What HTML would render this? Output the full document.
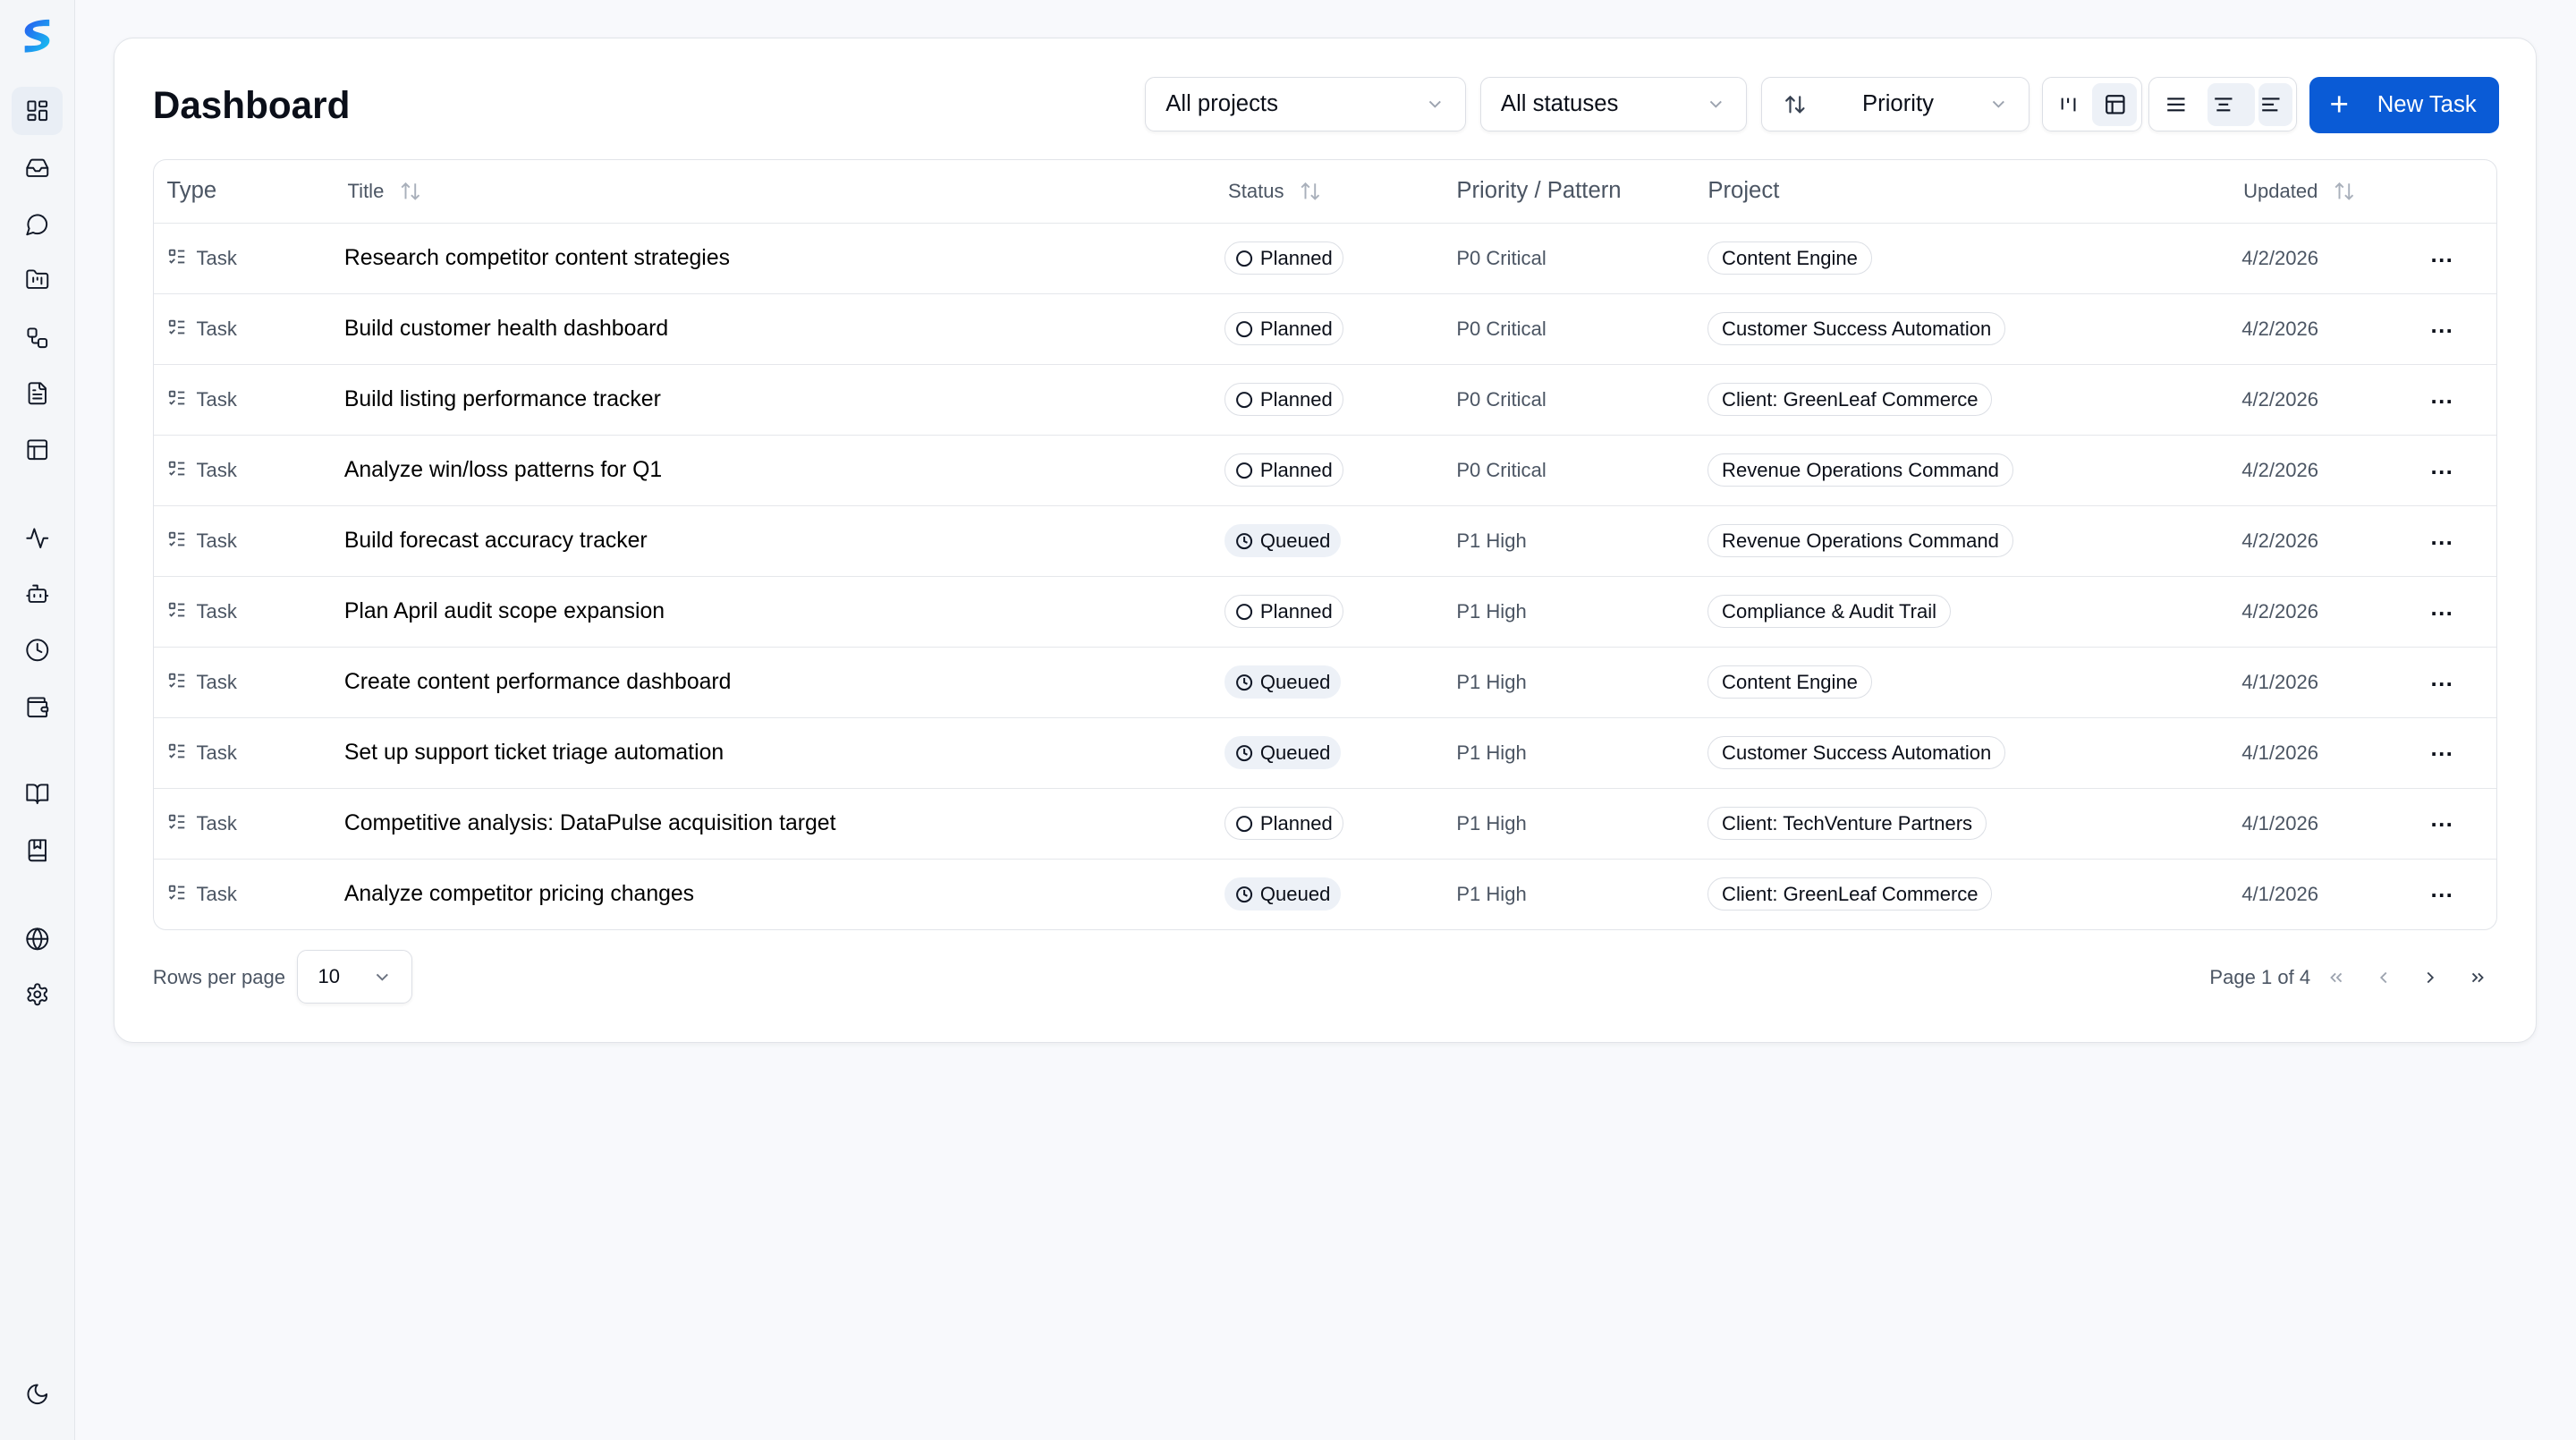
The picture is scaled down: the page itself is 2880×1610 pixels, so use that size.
<!DOCTYPE html>
<html><head><meta charset="utf-8"><style>
html,body{margin:0;padding:0;width:2880px;height:1610px;overflow:hidden;background:#f8f9fc}
#r{zoom:1.83673;width:1568px;height:877px;position:relative;font-family:"Liberation Sans",sans-serif;color:#0b0f19}
.a{position:absolute}
.sb{left:0;top:0;width:45px;height:877px;background:#f4f6f9;border-right:1px solid #e3e6eb}
.ic{position:absolute;left:15px;width:15px;height:15px}
.ic svg{width:15px;height:15px;fill:none;stroke:#111827;stroke-width:1.7;stroke-linecap:round;stroke-linejoin:round}
.card{left:69px;top:23px;width:1474px;height:611px;background:#fff;border:1px solid #e1e4e9;border-radius:12px;box-shadow:0 1px 3px rgba(0,0,0,.05)}
.sel{position:absolute;top:47px;height:32px;border:1px solid #dcdfe5;border-radius:6px;background:#fff;font-size:14px;line-height:32px;box-shadow:0 1px 2px rgba(0,0,0,.05)}
.chev{position:absolute;right:14px;top:12px;width:8px;height:8px}
.tbl{left:93px;top:97px;width:1426px;height:468px;border:1px solid #e1e4e9;border-radius:8px}
.row{position:absolute;left:0;width:1426px;height:43px;border-top:1px solid #e5e7eb;font-size:13px}
.row>*{position:absolute;top:0;line-height:42px}
.badge{top:11px!important;height:20px;line-height:20px!important;border:1px solid #dcdfe5;border-radius:10px;font-size:12px;padding:0 6px 0 6px;box-sizing:border-box}
.q{background:#edf1f7;border-color:#edf1f7}
.hd{position:absolute;top:0;line-height:38px;color:#4b5563}
.sort{display:inline-block;width:14px;height:14px;vertical-align:-3px;margin-left:9px}
</style></head><body><div id="r">
<div class="a sb">
<svg class="a" style="left:13px;top:11px" width="19" height="22" viewBox="0 0 19 22"><defs><linearGradient id="g" x1="0" y1="0" x2="1" y2="1"><stop offset="0" stop-color="#2857f0"/><stop offset="1" stop-color="#16c8f0"/></linearGradient></defs><path d="M17 1 L17 5 C12 5 7 5 7 7 C7 9 16 9 17 13 C18 18 10 21 2 21 L2 17 C8 17 12 17 12 15 C12 13 2 13 2 8 C2 3 10 1 17 1Z" fill="url(#g)"/></svg>
<div class="a" style="left:7px;top:53px;width:31px;height:29px;background:#e9eef5;border-radius:6px"></div>
<div class="ic" style="top:60px"><svg viewBox="0 0 24 24"><rect x="3" y="3" width="7" height="9" rx="1"/><rect x="14" y="3" width="7" height="5" rx="1"/><rect x="14" y="12" width="7" height="9" rx="1"/><rect x="3" y="16" width="7" height="5" rx="1"/></svg></div>
<div class="ic" style="top:95px"><svg viewBox="0 0 24 24"><path d="M22 12h-6l-2 3h-4l-2-3H2"/><path d="M5.45 5.11 2 12v6a2 2 0 0 0 2 2h16a2 2 0 0 0 2-2v-6l-3.45-6.89A2 2 0 0 0 16.76 4H7.24a2 2 0 0 0-1.79 1.11z"/></svg></div>
<div class="ic" style="top:129px"><svg viewBox="0 0 24 24"><path d="M7.9 20A9 9 0 1 0 4 16.1L2 22Z"/></svg></div>
<div class="ic" style="top:163px"><svg viewBox="0 0 24 24"><path d="M4 20h16a2 2 0 0 0 2-2V8a2 2 0 0 0-2-2h-7.9a2 2 0 0 1-1.7-.9l-.8-1.2A2 2 0 0 0 7.9 3H4a2 2 0 0 0-2 2v13a2 2 0 0 0 2 2Z"/><path d="M8 10v4M12 10v2M16 10v6"/></svg></div>
<div class="ic" style="top:198px"><svg viewBox="0 0 24 24"><rect x="3" y="3" width="8" height="8" rx="2"/><path d="M7 11v4a2 2 0 0 0 2 2h4"/><rect x="13" y="13" width="8" height="8" rx="2"/></svg></div>
<div class="ic" style="top:232px"><svg viewBox="0 0 24 24"><path d="M15 2H6a2 2 0 0 0-2 2v16a2 2 0 0 0 2 2h12a2 2 0 0 0 2-2V7Z"/><path d="M14 2v4a2 2 0 0 0 2 2h4M10 9H8M16 13H8M16 17H8"/></svg></div>
<div class="ic" style="top:266px"><svg viewBox="0 0 24 24"><rect x="3" y="3" width="18" height="18" rx="2"/><path d="M3 9h18M9 21V9"/></svg></div>
<div class="ic" style="top:320px"><svg viewBox="0 0 24 24"><path d="M22 12h-4l-3 9L9 3l-3 9H2"/></svg></div>
<div class="ic" style="top:354px"><svg viewBox="0 0 24 24"><path d="M12 8V4H8"/><rect x="4" y="8" width="16" height="12" rx="2"/><path d="M2 14h2M20 14h2M15 13v2M9 13v2"/></svg></div>
<div class="ic" style="top:388px"><svg viewBox="0 0 24 24"><circle cx="12" cy="12" r="10"/><path d="M12 6v6l4 2"/></svg></div>
<div class="ic" style="top:423px"><svg viewBox="0 0 24 24"><path d="M19 7V4a1 1 0 0 0-1-1H5a2 2 0 0 0 0 4h15a1 1 0 0 1 1 1v4h-3a2 2 0 0 0 0 4h3a1 1 0 0 0 1-1v-2a1 1 0 0 0-1-1"/><path d="M3 5v14a2 2 0 0 0 2 2h15a1 1 0 0 0 1-1v-4"/></svg></div>
<div class="ic" style="top:476px"><svg viewBox="0 0 24 24"><path d="M2 3h6a4 4 0 0 1 4 4v14a3 3 0 0 0-3-3H2zM22 3h-6a4 4 0 0 0-4 4v14a3 3 0 0 1 3-3h7z"/></svg></div>
<div class="ic" style="top:510px"><svg viewBox="0 0 24 24"><path d="M4 19.5v-15A2.5 2.5 0 0 1 6.5 2H20v20H6.5a2.5 2.5 0 0 1 0-5H20"/><path d="M9 2v8l3-2 3 2V2"/></svg></div>
<div class="ic" style="top:564px"><svg viewBox="0 0 24 24"><circle cx="12" cy="12" r="10"/><path d="M12 2a14.5 14.5 0 0 0 0 20 14.5 14.5 0 0 0 0-20M2 12h20"/></svg></div>
<div class="ic" style="top:598px"><svg viewBox="0 0 24 24"><path d="M12.22 2h-.44a2 2 0 0 0-2 2v.18a2 2 0 0 1-1 1.730l-.43.25a2 2 0 0 1-2 0l-.15-.08a2 2 0 0 0-2.73.73l-.22.38a2 2 0 0 0 .73 2.73l.15.1a2 2 0 0 1 1 1.72v.51a2 2 0 0 1-1 1.74l-.15.09a2 2 0 0 0-.73 2.73l.22.38a2 2 0 0 0 2.73.73l.15-.08a2 2 0 0 1 2 0l.43.25a2 2 0 0 1 1 1.73V20a2 2 0 0 0 2 2h.44a2 2 0 0 0 2-2v-.18a2 2 0 0 1 1-1.73l.43-.25a2 2 0 0 1 2 0l.15.08a2 2 0 0 0 2.73-.73l.22-.39a2 2 0 0 0-.73-2.73l-.15-.08a2 2 0 0 1-1-1.74v-.5a2 2 0 0 1 1-1.74l.15-.09a2 2 0 0 0 .73-2.73l-.22-.38a2 2 0 0 0-2.730-.73l-.15.08a2 2 0 0 1-2 0l-.43-.25a2 2 0 0 1-1-1.73V4a2 2 0 0 0-2-2z"/><circle cx="12" cy="12" r="3"/></svg></div>
<div class="ic" style="top:841px"><svg viewBox="0 0 24 24"><path d="M12 3a6 6 0 0 0 9 9 9 9 0 1 1-9-9Z"/></svg></div>
</div>

<div class="a card"></div>
<div class="a" style="left:93px;top:49px;font-size:23px;font-weight:bold;line-height:30px">Dashboard</div>

<div class="sel" style="left:697px;width:194px"><span style="margin-left:12px">All projects</span><svg class="chev" viewBox="0 0 10 10" fill="none" stroke="#9ca3af" stroke-width="1.3"><path d="M1 3l4 4 4-4"/></svg></div>
<div class="sel" style="left:901px;width:161px"><span style="margin-left:12px">All statuses</span><svg class="chev" viewBox="0 0 10 10" fill="none" stroke="#9ca3af" stroke-width="1.3"><path d="M1 3l4 4 4-4"/></svg></div>
<div class="sel" style="left:1072px;width:162px"><svg class="a" style="left:13px;top:9px" width="14" height="14" viewBox="0 0 24 24" fill="none" stroke="#374151" stroke-width="2" stroke-linecap="round"><path d="M7 20V4M3 8l4-4 4 4M17 4v16M13 16l4 4 4-4"/></svg><span style="position:absolute;left:61px">Priority</span><svg class="chev" viewBox="0 0 10 10" fill="none" stroke="#9ca3af" stroke-width="1.3"><path d="M1 3l4 4 4-4"/></svg></div>
<div class="sel" style="left:1243px;width:60px"><svg class="a" style="left:10px;top:10px" width="12" height="12" viewBox="0 0 24 24" fill="none" stroke="#111827" stroke-width="2.2"><path d="M4 4v14M11 4v6M19 4v16"/></svg><div class="a" style="left:30px;top:3px;width:27px;height:26px;background:#edf1f7;border-radius:5px"></div><svg class="a" style="left:37px;top:9px" width="14" height="14" viewBox="0 0 24 24" fill="none" stroke="#111827" stroke-width="2"><rect x="3" y="3" width="18" height="18" rx="2"/><path d="M3 9h18M9 21V9"/></svg></div>
<div class="sel" style="left:1308px;width:89px"><div class="a" style="left:35px;top:3px;width:29px;height:26px;background:#edf1f7;border-radius:5px"></div><div class="a" style="left:66px;top:3px;height:26px;background:#edf1f7;border-radius:5px;width:21px"></div>
<svg class="a" style="left:9px;top:9px" width="14" height="14" viewBox="0 0 24 24" fill="none" stroke="#111827" stroke-width="2"><path d="M3 6h18M3 12h18M3 18h18"/></svg>
<svg class="a" style="left:38px;top:9px" width="14" height="14" viewBox="0 0 24 24" fill="none" stroke="#111827" stroke-width="2"><path d="M3 6h18M7 12h10M5 18h14"/></svg>
<svg class="a" style="left:67px;top:9px" width="14" height="14" viewBox="0 0 24 24" fill="none" stroke="#111827" stroke-width="2"><path d="M3 6h18M3 12h12M3 18h16"/></svg></div>
<div class="a" style="left:1406px;top:47px;width:115px;height:34px;background:#0a5bd6;border-radius:6px;color:#fff;font-size:14px;line-height:34px"><span style="position:absolute;left:12px;font-size:20px;font-weight:300">+</span><span style="position:absolute;left:41px">New Task</span></div>

<div class="a tbl">
<div class="hd" style="left:8px;font-size:14px">Type</div>
<div class="hd" style="left:118px;font-size:12px">Title<svg class="sort" viewBox="0 0 24 24" fill="none" stroke="#a9b0bb" stroke-width="1.8"><path d="M7 20V4M3 8l4-4 4 4M17 4v16M13 16l4 4 4-4"/></svg></div>
<div class="hd" style="left:654px;font-size:12px">Status<svg class="sort" viewBox="0 0 24 24" fill="none" stroke="#a9b0bb" stroke-width="1.8"><path d="M7 20V4M3 8l4-4 4 4M17 4v16M13 16l4 4 4-4"/></svg></div>
<div class="hd" style="left:793px;font-size:14px">Priority / Pattern</div>
<div class="hd" style="left:946px;font-size:14px">Project</div>
<div class="hd" style="left:1272px;font-size:12px">Updated<svg class="sort" viewBox="0 0 24 24" fill="none" stroke="#a9b0bb" stroke-width="1.8"><path d="M7 20V4M3 8l4-4 4 4M17 4v16M13 16l4 4 4-4"/></svg></div>
<div id="rows"></div>
</div>

<div class="a" style="left:93px;top:588px;font-size:12px;color:#4b5563">Rows per page</div>
<div class="sel" style="left:181px;top:578px;width:69px;font-size:12px"><span style="margin-left:12px">10</span><svg class="chev" viewBox="0 0 10 10" fill="none" stroke="#6b7280" stroke-width="1.3"><path d="M1 3l4 4 4-4"/></svg></div>
<div class="a" style="left:1345px;top:588px;font-size:12px;color:#4b5563">Page 1 of 4</div>
<svg class="a" style="left:1416px;top:589px" width="12" height="12" viewBox="0 0 24 24" fill="none" stroke="#9ca3af" stroke-width="2"><path d="M11 17l-5-5 5-5M18 17l-5-5 5-5"/></svg>
<svg class="a" style="left:1445px;top:589px" width="12" height="12" viewBox="0 0 24 24" fill="none" stroke="#9ca3af" stroke-width="2"><path d="M15 18l-6-6 6-6"/></svg>
<svg class="a" style="left:1473px;top:589px" width="12" height="12" viewBox="0 0 24 24" fill="none" stroke="#374151" stroke-width="2"><path d="M9 18l6-6-6-6"/></svg>
<svg class="a" style="left:1502px;top:589px" width="12" height="12" viewBox="0 0 24 24" fill="none" stroke="#374151" stroke-width="2"><path d="M6 17l5-5-5-5M13 17l5-5-5-5"/></svg>
</div>
<script>
var d=[["Research competitor content strategies",0,"P0 Critical","Content Engine","4/2/2026"],
["Build customer health dashboard",0,"P0 Critical","Customer Success Automation","4/2/2026"],
["Build listing performance tracker",0,"P0 Critical","Client: GreenLeaf Commerce","4/2/2026"],
["Analyze win/loss patterns for Q1",0,"P0 Critical","Revenue Operations Command","4/2/2026"],
["Build forecast accuracy tracker",1,"P1 High","Revenue Operations Command","4/2/2026"],
["Plan April audit scope expansion",0,"P1 High","Compliance &amp; Audit Trail","4/2/2026"],
["Create content performance dashboard",1,"P1 High","Content Engine","4/1/2026"],
["Set up support ticket triage automation",1,"P1 High","Customer Success Automation","4/1/2026"],
["Competitive analysis: DataPulse acquisition target",0,"P1 High","Client: TechVenture Partners","4/1/2026"],
["Analyze competitor pricing changes",1,"P1 High","Client: GreenLeaf Commerce","4/1/2026"]];
var h="";
var ti='<svg width="12" height="12" viewBox="0 0 24 24" fill="none" stroke="#4b5563" stroke-width="2" style="vertical-align:-1px;margin-right:6px"><rect x="3" y="4" width="6" height="6" rx="1"/><path d="M3 17l2 2 4-4M13 5h8M13 12h8M13 19h8"/></svg>';
var pi='<svg width="11" height="11" viewBox="0 0 24 24" fill="none" stroke="#111827" stroke-width="2.4" style="vertical-align:-1.5px;margin-right:4px"><circle cx="12" cy="12" r="9.5"/></svg>';
var qi='<svg width="11" height="11" viewBox="0 0 24 24" fill="none" stroke="#111827" stroke-width="2.4" style="vertical-align:-1.5px;margin-right:4px"><circle cx="12" cy="12" r="9.5"/><path d="M12 6v6l4 2"/></svg>';
d.forEach(function(r,i){
h+='<div class="row" style="top:'+(38+i*43)+'px"><div style="left:8px;color:#4b5563;font-size:12px">'+ti+'Task</div><div style="left:116px;font-size:13.5px;color:#000">'+r[0]+'</div><div class="badge'+(r[1]?' q':'')+'" style="left:652px">'+(r[1]?qi+'Queued':pi+'Planned')+'</div><div style="left:793px;color:#4b5563;font-size:12px">'+r[2]+'</div><div class="badge" style="left:946px;padding:0 8px">'+r[3]+'</div><div style="left:1271px;color:#4b5563;font-size:12px">'+r[4]+'</div><div style="left:1386px;font-weight:bold;font-size:14px;top:2px">&middot;&middot;&middot;</div></div>';});
document.getElementById("rows").innerHTML=h;
</script>
</body></html>
